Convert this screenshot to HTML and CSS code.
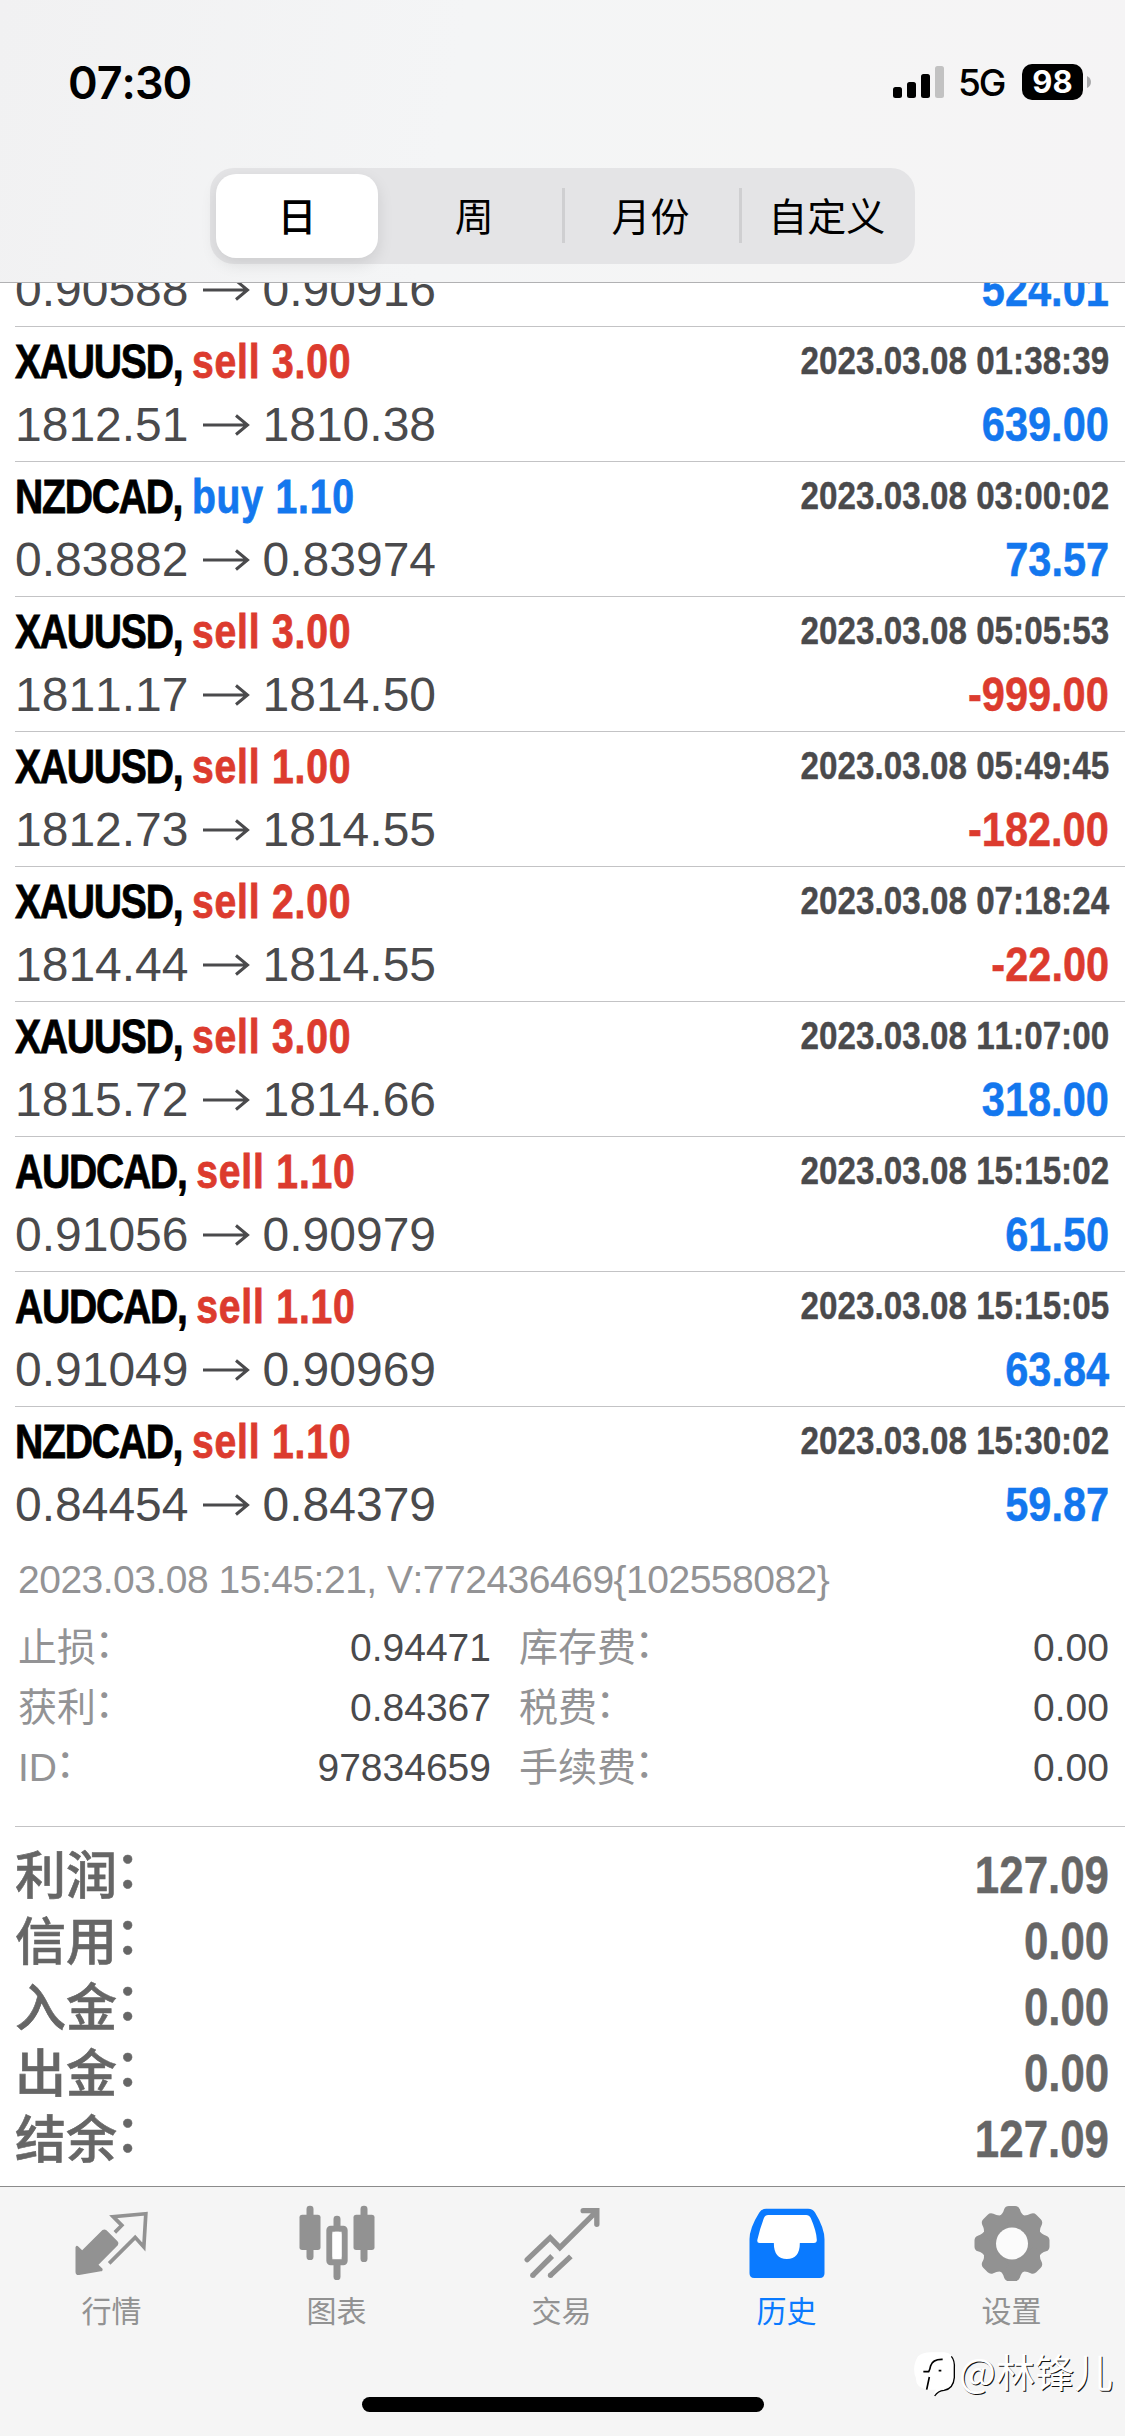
FILE: index.html
```html
<!DOCTYPE html>
<html lang="zh-CN">
<head>
<meta charset="utf-8">
<title>历史</title>
<link rel="stylesheet" href="styles.css">
</head>
<body>
<div class="app">
  <header class="top">
    <div class="status">
      <span class="clock">07:30</span>
      <div class="status-right">
        <svg class="signal" width="51" height="33" viewBox="0 0 51 33">
          <rect x="0" y="21" width="9" height="11" rx="2.5"/>
          <rect x="14" y="16" width="9" height="16" rx="2.5"/>
          <rect x="28" y="8" width="9" height="24" rx="2.5"/>
          <rect x="42" y="0" width="9" height="32" rx="2.5" fill="#c2c2c2"/>
        </svg>
        <span class="network">5G</span>
        <span class="battery">98</span>
        <svg class="battery-cap" width="4" height="12" viewBox="0 0 4 12"><path d="M0 0Q4 2 4 6T0 12Z" fill="#a9a9ab"/></svg>
      </div>
    </div>
    <nav class="segments">
      <span class="segment selected">日</span>
      <span class="segment">周</span>
      <span class="segment divided">月份</span>
      <span class="segment divided">自定义</span>
    </nav>
  </header>

  <main class="history">
    <svg width="0" height="0" class="defs"><symbol id="arrow" viewBox="0 0 48 22"><path d="M1 11H45M34 1.5L45.5 11L34 20.5" fill="none" stroke="#4a4a4c" stroke-width="3"/></symbol></svg>
    <article class="deal clipped">
      <div class="line"><span class="title">AUDCAD, <b class="buy">buy 1.10</b></span><time>2023.03.08 00:15:03</time></div>
      <div class="line"><span class="prices">0.90588<svg><use href="#arrow"/></svg>0.90916</span><span class="amount">524.01</span></div>
    </article>
    <article class="deal">
      <div class="line"><span class="title">XAUUSD, <b class="sell">sell 3.00</b></span><time>2023.03.08 01:38:39</time></div>
      <div class="line"><span class="prices">1812.51<svg><use href="#arrow"/></svg>1810.38</span><span class="amount">639.00</span></div>
    </article>
    <article class="deal">
      <div class="line"><span class="title">NZDCAD, <b class="buy">buy 1.10</b></span><time>2023.03.08 03:00:02</time></div>
      <div class="line"><span class="prices">0.83882<svg><use href="#arrow"/></svg>0.83974</span><span class="amount">73.57</span></div>
    </article>
    <article class="deal">
      <div class="line"><span class="title">XAUUSD, <b class="sell">sell 3.00</b></span><time>2023.03.08 05:05:53</time></div>
      <div class="line"><span class="prices">1811.17<svg><use href="#arrow"/></svg>1814.50</span><span class="amount loss">-999.00</span></div>
    </article>
    <article class="deal">
      <div class="line"><span class="title">XAUUSD, <b class="sell">sell 1.00</b></span><time>2023.03.08 05:49:45</time></div>
      <div class="line"><span class="prices">1812.73<svg><use href="#arrow"/></svg>1814.55</span><span class="amount loss">-182.00</span></div>
    </article>
    <article class="deal">
      <div class="line"><span class="title">XAUUSD, <b class="sell">sell 2.00</b></span><time>2023.03.08 07:18:24</time></div>
      <div class="line"><span class="prices">1814.44<svg><use href="#arrow"/></svg>1814.55</span><span class="amount loss">-22.00</span></div>
    </article>
    <article class="deal">
      <div class="line"><span class="title">XAUUSD, <b class="sell">sell 3.00</b></span><time>2023.03.08 11:07:00</time></div>
      <div class="line"><span class="prices">1815.72<svg><use href="#arrow"/></svg>1814.66</span><span class="amount">318.00</span></div>
    </article>
    <article class="deal">
      <div class="line"><span class="title">AUDCAD, <b class="sell">sell 1.10</b></span><time>2023.03.08 15:15:02</time></div>
      <div class="line"><span class="prices">0.91056<svg><use href="#arrow"/></svg>0.90979</span><span class="amount">61.50</span></div>
    </article>
    <article class="deal">
      <div class="line"><span class="title">AUDCAD, <b class="sell">sell 1.10</b></span><time>2023.03.08 15:15:05</time></div>
      <div class="line"><span class="prices">0.91049<svg><use href="#arrow"/></svg>0.90969</span><span class="amount">63.84</span></div>
    </article>
    <article class="deal">
      <div class="line"><span class="title">NZDCAD, <b class="sell">sell 1.10</b></span><time>2023.03.08 15:30:02</time></div>
      <div class="line"><span class="prices">0.84454<svg><use href="#arrow"/></svg>0.84379</span><span class="amount">59.87</span></div>
    </article>

    <section class="details">
      <p class="stamp">2023.03.08 15:45:21, V:772436469{102558082}</p>
      <dl class="facts">
        <dt>止损<i>：</i></dt><dd>0.94471</dd><dt>库存费<i>：</i></dt><dd>0.00</dd>
        <dt>获利<i>：</i></dt><dd>0.84367</dd><dt>税费<i>：</i></dt><dd>0.00</dd>
        <dt>ID<i>：</i></dt><dd>97834659</dd><dt>手续费<i>：</i></dt><dd>0.00</dd>
      </dl>
    </section>

    <section class="summary">
      <div class="total"><span class="name">利润<i>：</i></span><span class="sum">127.09</span></div>
      <div class="total"><span class="name">信用<i>：</i></span><span class="sum">0.00</span></div>
      <div class="total"><span class="name">入金<i>：</i></span><span class="sum">0.00</span></div>
      <div class="total"><span class="name">出金<i>：</i></span><span class="sum">0.00</span></div>
      <div class="total"><span class="name">结余<i>：</i></span><span class="sum">127.09</span></div>
    </section>
  </main>

  <footer class="tabbar">
    <nav class="tabs">
      <a class="tab">
        <svg viewBox="217.5 72 240 240">
          <path d="M306 150Q312 146 318 151L351 184Q357 190 352 196L294 254L306 266Q308 273 301 274L236 285Q225 286 225 275V202Q227 194 234 200L245 211Z" fill="currentColor"/>
          <path d="M343 157L364 136L338 110L436 101L430 201L404 172L326 250" fill="none" stroke="currentColor" stroke-width="11"/>
        </svg>
        <span>行情</span>
      </a>
      <a class="tab">
        <svg viewBox="892.5 72 240 240">
          <g fill="currentColor"><rect x="897" y="104" width="63" height="106" rx="8"/><rect x="918" y="77" width="21" height="163" rx="10"/><rect x="1059" y="104" width="63" height="106" rx="8"/><rect x="1080" y="77" width="21" height="169" rx="10"/><rect x="999" y="107" width="21" height="40" rx="10"/><rect x="999" y="245" width="21" height="55" rx="10"/></g>
          <rect x="986.500" y="146.500" width="46" height="100" rx="4" fill="none" stroke="currentColor" stroke-width="18"/>
          <rect x="996" y="155" width="27" height="82" rx="9" fill="#fff"/>
        </svg>
        <span>图表</span>
      </a>
      <a class="tab">
        <svg viewBox="367.5 72 240 240">
          <path d="M380 239L449 173L478 203L585 97M548 92H589V133" fill="none" stroke="currentColor" stroke-width="16" stroke-linecap="round"/>
          <path d="M396 287L455 228M449 287L511 229" fill="none" stroke="currentColor" stroke-width="16"/>
          <circle cx="397" cy="286" r="8" fill="currentColor"/><circle cx="450" cy="286" r="8" fill="currentColor"/>
        </svg>
        <span>交易</span>
      </a>
      <a class="tab active">
        <svg viewBox="67.5 72 240 240">
          <path d="M122 86H248Q262 86 269 98Q297 144 297 178V280Q297 294 283 294H86Q72 294 72 280V178Q72 144 101 98Q108 86 122 86Z" fill="currentColor"/>
          <path d="M128 105H242Q251 105 256 115Q273 154 274 180Q274 189 265 189H223Q223 237 184 237Q145 237 145 189H102Q93 189 96 178Q102 150 115 115Q119 105 128 105Z" fill="#fff"/>
        </svg>
        <span>历史</span>
      </a>
      <a class="tab">
        <svg viewBox="742.5 72 240 240">
          <g fill="currentColor">
            <circle cx="859.500" cy="190.500" r="91"/>
            <g id="teeth">
              <path id="tooth" d="M820 110Q832 103 836 88Q840 78 850 78H869Q879 78 883 88Q887 103 899 110V140H820Z"/>
              <use href="#tooth" transform="rotate(45 859.5 190.5)"/>
              <use href="#tooth" transform="rotate(90 859.5 190.5)"/>
              <use href="#tooth" transform="rotate(135 859.5 190.5)"/>
            </g>
            <use href="#teeth" transform="rotate(180 859.5 190.5)"/>
          </g>
          <circle cx="859.500" cy="190.500" r="48" fill="#fbfbfb"/>
        </svg>
        <span>设置</span>
      </a>
    </nav>
    <div class="home"></div>
    <div class="credit">
      <svg width="44" height="48" viewBox="0 0 132 144">
        <path d="M12 22Q28 8 58 10H92Q118 12 119 44V86Q119 116 92 120Q72 121 62 140Q58 130 66 122L40 122Q4 116 6 88Q-8 56 12 22Z" fill="#fff"/>
        <path d="M28 68H44Q48 62 50 50Q56 30 86 31M46 84L38 122M74 65H82" fill="none" stroke="#000" stroke-width="5"/>
        <path d="M112 22Q123 34 121 60V86Q118 120 90 124Q72 125 62 141" fill="none" stroke="#000" stroke-width="4"/>
      </svg>
      <span>@林锋儿</span>
    </div>
  </footer>
</div>
</body>
</html>
```
FILE: styles.css
```css
* { box-sizing: border-box; }
body { margin: 0; background: #fff; font-family: "Liberation Sans", "Noto Sans CJK SC", sans-serif; font-kerning: none; }
.app { width: 1125px; height: 2436px; display: flex; flex-direction: column; overflow: hidden; }

.top {
  flex: none; height: 283px; border-bottom: 1px solid #b1b1b3;
  background: linear-gradient(100deg, #f1f1f2, #f4f5f6 40%, #f5f5f5 70%, #f5f4f5);
  display: flex; flex-direction: column; align-items: center;
}
.status {
  width: 100%; height: 168px; padding: 0 34px 4px 68px;
  display: flex; justify-content: space-between; align-items: center;
  font-family: Inter, "Liberation Sans", sans-serif; color: #000;
}
.clock { font-size: 45px; font-weight: 600; letter-spacing: -1px; }
.status-right { display: flex; align-items: center; }
.network { margin-left: 14px; width: 49px; font-size: 37px; font-weight: 500; letter-spacing: -2px; padding-top: 1px; }
.battery {
  margin-left: 15px; width: 61px; height: 36px; border-radius: 10px; background: #000; color: #fff;
  font-size: 31px; line-height: 36px; font-weight: 700; text-align: center;
}
.battery-cap { margin-left: 4px; }

.segments { display: flex; width: 705px; height: 96px; padding: 6px 0 6px 6px; border-radius: 24px; background: #e4e4e6; }
.segment {
  flex: 1; display: flex; align-items: center; justify-content: center;
  font: 400 39px/60px "Noto Sans CJK SC", sans-serif; color: #000; padding-bottom: 4px;
}
.segment.selected { flex: 0 0 162px; margin-right: 8px; border-radius: 20px; background: #fff; font-weight: 500; box-shadow: 0 6px 16px rgba(0, 0, 0, .1); }
.segment.divided { background: linear-gradient(#cfcfd1, #cfcfd1) 0 14px / 3px 55px no-repeat; }

.history { flex: 1; min-height: 0; overflow: hidden; }
.defs { display: block; }
.deal { margin-left: 15px; height: 135px; padding: 3px 16px 5px 0; border-top: 1px solid #c3c3c5; }
.deal.clipped { margin-top: -92px; }
.line { display: flex; justify-content: space-between; height: 63px; line-height: 63px; white-space: nowrap; }
.title { font-size: 48px; font-weight: 700; letter-spacing: -1.5px; color: #000; transform: scaleX(.814); transform-origin: left; -webkit-text-stroke: .8px currentColor; }
.title b { letter-spacing: 1px; }
.sell { color: #dc3b2e; }
.buy { color: #1377ee; }
time { font-size: 39px; font-weight: 700; line-height: 61px; color: #4a4a4c; transform: scaleX(.852); transform-origin: right; -webkit-text-stroke: .4px currentColor; }
.prices { display: flex; align-items: center; font-size: 48px; color: #4a4a4c; }
.prices svg { width: 48px; height: 22px; margin: 0 13px; }
.amount { font-size: 48px; font-weight: 700; color: #1377ee; transform: scaleX(.865); transform-origin: right; -webkit-text-stroke: .5px currentColor; }
.amount.loss { color: #dc3b2e; }

i { font-style: normal; line-height: 0; vertical-align: .11em; margin-left: -.04em; }
.details { padding: 9px 16px 0 18px; height: 285px; font-size: 39px; line-height: 60px; color: #939395; }
.stamp { margin: 0 0 8px; letter-spacing: -.5px; }
.facts { margin: 0; display: grid; grid-template-columns: 112px 361px 168px 1fr; grid-auto-rows: 60px; }
.facts dt { white-space: nowrap; }
.facts dt:nth-of-type(even) { padding-left: 28px; }
.facts dd { margin: 0; text-align: right; color: #4a4a4c; }

.summary { margin-left: 15px; padding: 16px 16px 0 0; border-top: 1px solid #c3c3c5; font-size: 51px; color: #666; }
.total { display: flex; justify-content: space-between; height: 66px; line-height: 66px; }
.name { font-weight: 500; font-family: "Noto Sans CJK SC", sans-serif; line-height: 59px; -webkit-text-stroke: .6px currentColor; }
.sum { font-size: 51px; font-weight: 700; transform: scaleX(.86); transform-origin: right; -webkit-text-stroke: .4px currentColor; }

.tabbar { position: relative; flex: none; height: 250px; border-top: 1px solid #8b8b8b; background: #f5f5f5; display: flex; flex-direction: column; align-items: center; }
.tabs { width: 100%; display: grid; grid-template-columns: repeat(5, 1fr); padding-top: 17px; }
.tab { display: flex; flex-direction: column; align-items: center; color: #929292; font: 400 30px/44px "Noto Sans CJK SC", sans-serif; }
.tab svg { width: 80px; height: 80px; margin-bottom: 3px; }
.tab span { padding-right: 2px; }
.tab.active { color: #0a7aff; }
.home { width: 402px; height: 15px; border-radius: 8px; background: #000; margin-top: 66px; }
.credit { position: absolute; left: 914px; top: 162px; display: flex; align-items: flex-start; gap: 1px; color: #fff; font: 400 39px/48px "Noto Sans CJK SC", sans-serif; white-space: nowrap; text-shadow: 1px 1px 0 #111; }
.credit span { line-height: 42px; }
```
